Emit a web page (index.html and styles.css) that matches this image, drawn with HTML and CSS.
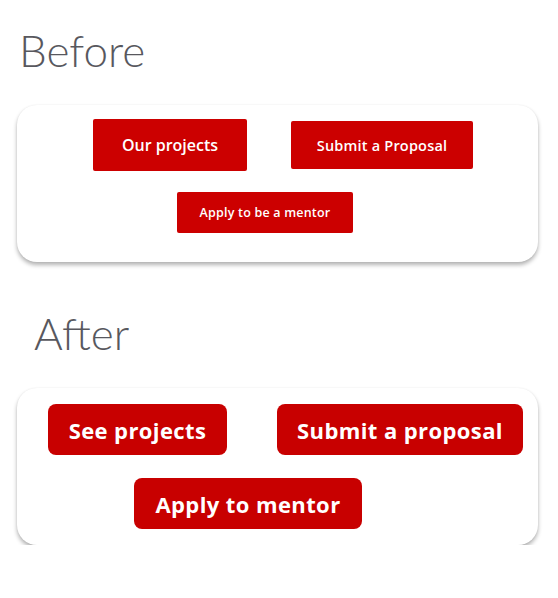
FILE: index.html
```html
<!DOCTYPE html>
<html lang="en">
<head>
  <meta charset="utf-8">
  <title>Call to action buttons</title>
  <link rel="stylesheet" href="styles.css">
</head>
<body>
  <div class="compare">
    <h2 class="label label-before">Before</h2>
    <div class="card card-before">
      <div class="row row-top">
        <a class="old-btn old-btn-big" href="#">Our projects</a>
        <a class="old-btn old-btn-mid" href="#">Submit a Proposal</a>
      </div>
      <div class="row row-bottom">
        <a class="old-btn old-btn-small" href="#">Apply to be a mentor</a>
      </div>
    </div>

    <h2 class="label label-after">After</h2>
    <div class="card card-after">
      <div class="row row-top">
        <a class="new-btn new-btn-see" href="#">See projects</a>
        <a class="new-btn new-btn-submit" href="#">Submit a proposal</a>
      </div>
      <div class="row row-bottom">
        <a class="new-btn new-btn-apply" href="#">Apply to mentor</a>
      </div>
    </div>
  </div>
</body>
</html>
```

FILE: styles.css
```css
body {
  margin: 0;
  background: #fff;
  font-family: Lato, "Open Sans", sans-serif;
}

.compare {
  padding: 28px 20px 0 17px;
}

.label {
  margin: 0;
  font-size: 44px;
  line-height: 44px;
  font-weight: 300;
  color: #58585e;
}

.label-before {
  padding-left: 2px;
}

.label-after {
  margin-top: 49px;
  padding-left: 17px;
}

.card {
  width: 521px;
  margin-top: 33px;
  background: #fff;
  border-radius: 20px;
  box-shadow: 0 3px 4px rgba(0, 0, 0, 0.3), 0 0 2px rgba(0, 0, 0, 0.06);
  box-sizing: border-box;
}

.row {
  display: flex;
  align-items: center;
}

/* old style buttons */
.card-before {
  padding: 14px 0 29px 76px;
}

.card-before .row-top {
  gap: 44px;
}

.card-before .row-bottom {
  margin-top: 21px;
  padding-left: 84px;
}

.old-btn {
  display: flex;
  align-items: center;
  justify-content: center;
  box-sizing: border-box;
  background: #cc0000;
  color: #fff;
  text-decoration: none;
  border-radius: 2px;
  font-family: "Open Sans", sans-serif;
  font-weight: 600;
}

.old-btn-big {
  width: 154px;
  height: 52px;
  font-size: 16px;
}

.old-btn-mid {
  width: 182px;
  height: 48px;
  font-size: 14.5px;
  letter-spacing: 0.2px;
}

.old-btn-small {
  width: 176px;
  height: 41px;
  font-size: 12.5px;
  letter-spacing: 0.2px;
}

/* new style buttons */
.card-after {
  padding: 16px 0 16px 31px;
}

.card-after .row-top {
  gap: 50px;
}

.card-after .row-bottom {
  margin-top: 23px;
  padding-left: 86px;
}

.new-btn {
  display: flex;
  align-items: center;
  justify-content: center;
  box-sizing: border-box;
  height: 51px;
  background: #c80000;
  color: #fff;
  text-decoration: none;
  border-radius: 8px;
  font-family: "Open Sans", sans-serif;
  font-weight: 700;
  font-size: 22px;
  letter-spacing: 0.4px;
}

.new-btn-see {
  width: 179px;
}

.new-btn-submit {
  width: 246px;
}

.new-btn-apply {
  width: 228px;
}
```
